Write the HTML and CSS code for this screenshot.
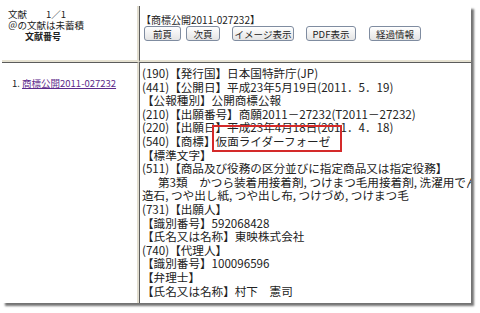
FILE: index.html
```html
<html>
<head>
  <meta charset="utf-8">
  <link rel="stylesheet" href="styles.css">
</head>
<body>
  <div class="frame">
    <div class="cell head left">
      <div>文献　　1／1</div>
      <div>＠の文献は未蓄積</div>
      <div class="docno">文献番号</div>
    </div>
    <div class="cell head right">
      <div class="title">【商標公開2011-027232】</div>
      <div class="buttons">
        <button class="btn btn-prev">前頁</button>
        <button class="btn btn-next">次頁</button>
        <button class="btn btn-image">イメージ表示</button>
        <button class="btn btn-pdf">PDF表示</button>
        <button class="btn btn-history">経過情報</button>
      </div>
    </div>
    <div class="cell body left">
      <div class="item">1. <a href="#">商標公開2011-027232</a></div>
    </div>
    <div class="cell body right">
      <div class="doc">
        <div>(190)【発行国】日本国特許庁(JP)</div>
        <div>(441)【公開日】平成23年5月19日(2011．5．19)</div>
        <div>【公報種別】公開商標公報</div>
        <div>(210)【出願番号】商願2011－27232(T2011－27232)</div>
        <div>(220)【出願日】平成23年4月18日(2011．4．18)</div>
        <div>(540)【商標】<span class="mark">仮面ライダーフォーゼ</span></div>
        <div>【標準文字】</div>
        <div>(511)【商品及び役務の区分並びに指定商品又は指定役務】</div>
        <div class="indent">第3類　かつら装着用接着剤, つけまつ毛用接着剤, 洗濯用でん粉のり</div>
        <div>造石, つや出し紙, つや出し布, つけづめ, つけまつ毛</div>
        <div>(731)【出願人】</div>
        <div>【識別番号】592068428</div>
        <div>【氏名又は名称】東映株式会社</div>
        <div>(740)【代理人】</div>
        <div>【識別番号】100096596</div>
        <div>【弁理士】</div>
        <div>【氏名又は名称】村下　憲司</div>
      </div>
    </div>
  </div>
</body>
</html>
```

FILE: styles.css
```css
body {
  margin: 0;
  background: #ffffff;
  font-family: "Noto Sans CJK JP", sans-serif;
  color: #222222;
}
.frame {
  margin: 6px 0 0 2px;
  width: 469px;
  height: 297px;
  display: grid;
  grid-template-columns: 137px 1fr;
  grid-template-rows: 56px 1fr;
  background: #ffffff;
  box-shadow: 3px 3px 2px rgba(0, 0, 0, 0.55);
  overflow: hidden;
}
.cell {
  overflow: hidden;
}
.cell.left {
  border-right: 2px solid #e2ded0;
}
.cell.right {
  border-left: 1px solid #5c5c5c;
}
.cell.head {
  border-bottom: 2px solid #e6e2d2;
}
.cell.body {
  border-top: 1px solid #5c5c5c;
}
.head.left {
  padding: 3px 0 0 6px;
  font-size: 9.5px;
  line-height: 11px;
}
.docno {
  padding-left: 17px;
  font-weight: bold;
  font-size: 9px;
}
.head.right {
  padding: 8px 0 0 1px;
  font-size: 10px;
  line-height: 12px;
}
.buttons {
  display: flex;
  padding: 0 0 0 3px;
}
.btn {
  height: 15px;
  padding: 0;
  font-family: "Noto Sans CJK JP", sans-serif;
  font-size: 9.5px;
  line-height: 12px;
  color: #222222;
  border: 1px solid #7f8ca0;
  border-radius: 3px;
  background: linear-gradient(#ffffff, #e4e4e4);
}
.btn-prev { width: 37px; }
.btn-next { width: 34px; margin-left: 5px; }
.btn-image { width: 62px; margin-left: 12px; }
.btn-pdf { width: 50px; margin-left: 12px; }
.btn-history { width: 52px; margin-left: 13px; }
.body.left {
  padding: 14px 0 0 10px;
  font-size: 9.5px;
  line-height: 12px;
}
.item a {
  color: #5d2a8c;
}
.body.right {
  padding: 4px 0 0 2px;
}
.doc {
  font-size: 11.6px;
  line-height: 13.6px;
  white-space: nowrap;
}
.indent {
  padding-left: 16px;
}
.mark {
  position: relative;
}
.mark::after {
  content: "";
  position: absolute;
  left: -4px;
  top: -8px;
  right: -12px;
  bottom: -3px;
  border: 2px solid #d42a2a;
}
```
